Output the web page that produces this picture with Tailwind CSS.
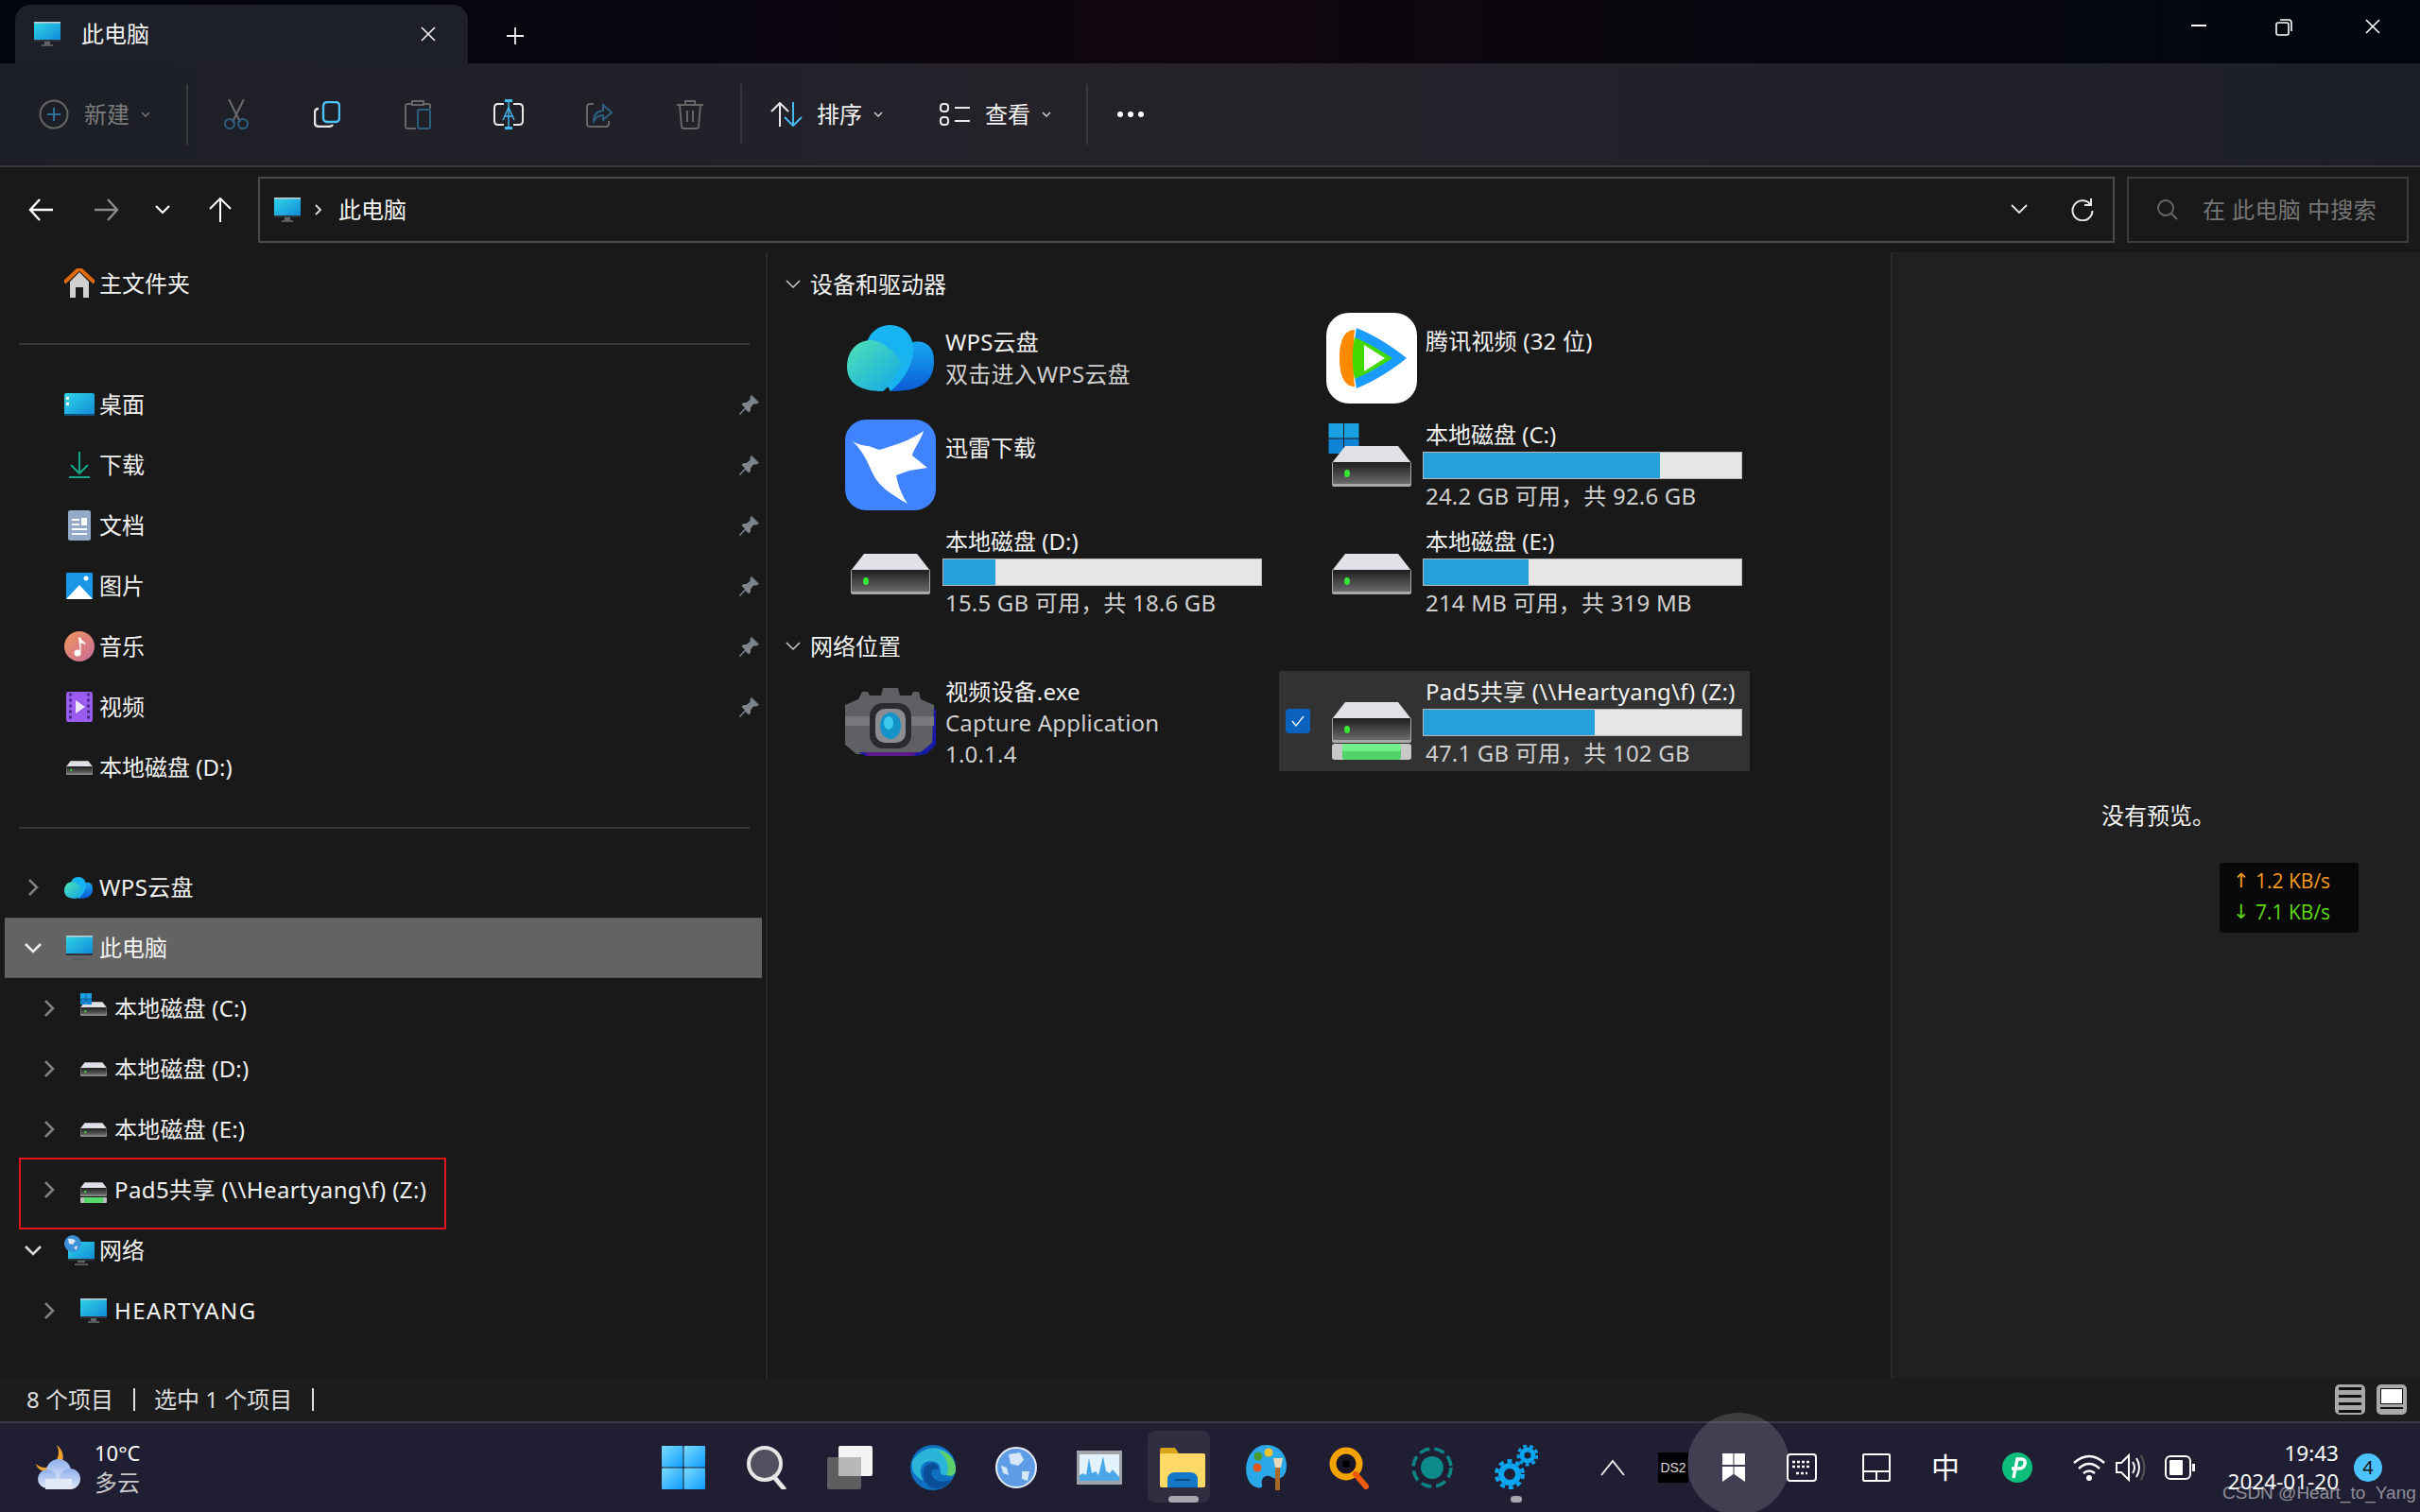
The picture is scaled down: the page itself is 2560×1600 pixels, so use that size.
<!DOCTYPE html>
<html lang="zh-CN">
<head>
  <meta charset="UTF-8" />
  <title>此电脑 - 文件资源管理器</title>
  <script src="https://cdn.jsdelivr.net/npm/@tailwindcss/browser@4"></script>
</head>
<body class="relative w-[2560px] h-[1600px] overflow-hidden bg-[#191919] text-[24px] text-[#f2f2f2] font-['Noto_Sans','Noto_Sans_CJK_SC',sans-serif]">

  <!-- shared icons -->
  <svg class="absolute w-0 h-0">
    <defs>
      <linearGradient id="screen" x1="0" y1="0" x2="1" y2="1"><stop offset="0" stop-color="#2fd6e6"/><stop offset="1" stop-color="#1189d8"/></linearGradient>
      <linearGradient id="driveBody" x1="0" y1="0" x2="0" y2="1"><stop offset="0" stop-color="#1e1e1e"/><stop offset="1" stop-color="#6a6a6a"/></linearGradient>
      <linearGradient id="winBlue" x1="0" y1="0" x2="1" y2="1"><stop offset="0" stop-color="#7bdcff"/><stop offset="1" stop-color="#0f9cff"/></linearGradient>
      <linearGradient id="cloudTeal" x1="0" y1="0" x2="1" y2="1"><stop offset="0" stop-color="#4fe3b5"/><stop offset="1" stop-color="#12a6e8"/></linearGradient>
      <linearGradient id="cloudBlue" x1="0" y1="0" x2="0" y2="1"><stop offset="0" stop-color="#17a8f0"/><stop offset="1" stop-color="#0b5bd6"/></linearGradient>
      <linearGradient id="music" x1="0" y1="0" x2="1" y2="1"><stop offset="0" stop-color="#f0975a"/><stop offset="1" stop-color="#c96a9c"/></linearGradient>
      <linearGradient id="cloudPale" x1="0" y1="0" x2="0" y2="1"><stop offset="0" stop-color="#8fb0ec"/><stop offset="1" stop-color="#e2eaf8"/></linearGradient>
      <symbol id="pc" viewBox="0 0 28 26">
        <rect width="28" height="20" fill="url(#screen)"/><rect width="28" height="1.5" fill="#c4d0d6"/><rect y="19" width="28" height="2" fill="#2f3338"/>
        <rect x="11" y="21" width="6" height="3" fill="#666"/><rect x="8" y="24" width="12" height="2" fill="#55585c"/>
      </symbol>
      <symbol id="drive" viewBox="0 0 84 43">
        <path d="M14 0H70L84 18H0Z" fill="#e0e1e6"/><rect y="17" width="84" height="26" rx="2" fill="#a9a9a9"/><rect x="1" y="17" width="82" height="23" fill="url(#driveBody)"/>
        <ellipse cx="16" cy="29" rx="3" ry="4" fill="#35e835"/>
      </symbol>
      <symbol id="win" viewBox="0 0 32 32">
        <rect width="15.5" height="15.5" fill="#1ba1e2"/><rect x="16.5" width="15.5" height="15.5" fill="#1ba1e2"/><rect y="16.5" width="15.5" height="15.5" fill="#0f84d6"/><rect x="16.5" y="16.5" width="15.5" height="15.5" fill="#0f84d6"/>
      </symbol>
      <symbol id="pin" viewBox="0 0 21 21">
        <path d="M13 0l8 8-3 1.500-3 0-3 4 0 3-2 2-3.500-3.500L1 21l-1 0 0-1 6-6.500L2.500 10l2-2 3 0 4-3 0-3z" fill="#7d848b"/>
      </symbol>
      <symbol id="cloud" viewBox="0 0 92 70">
        <path d="M46 70C76 70 92 62 92 38 92 20 80 16 70 18L50 40Z" fill="url(#cloudBlue)"/>
        <path d="M20 26C20 10 32 0 46 0 62 0 72 14 70 30 68 46 58 60 46 70Z" fill="#18b4f2"/>
        <path d="M0 44C0 26 12 16 26 16 34 16 50 26 58 40 52 54 46 64 38 70 14 70 0 62 0 44Z" fill="url(#cloudTeal)"/>
      </symbol>
    </defs>
  </svg>

  <!-- title bar -->
  <div class="flex h-[67px] bg-linear-to-r from-[#02050f] via-[#10060e] to-[#01060f]">
    <div class="flex items-center ml-4 mt-[5px] w-[479px] pl-5 rounded-t-[16px] bg-[#1e2029]">
      <svg class="w-7 h-[26px]"><use href="#pc"/></svg>
      <span class="ml-[22px]">此电脑</span>
      <svg class="ml-auto mr-[34px] w-4 h-4" viewBox="0 0 16 16" fill="none" stroke="#f0f0f0" stroke-width="1.600"><path d="M1 1L15 15M15 1L1 15"/></svg>
    </div>
    <svg class="ml-[41px] self-center mt-2 w-[18px] h-[18px]" viewBox="0 0 18 18" fill="none" stroke="#f0f0f0" stroke-width="1.800"><path d="M9 0V18M0 9H18"/></svg>
    <div class="ml-auto flex items-start pt-5">
      <svg class="w-4 h-[14px]" viewBox="0 0 16 14" fill="none" stroke="#fff" stroke-width="2"><path d="M0 7H16"/></svg>
      <svg class="ml-[73px] w-[18px] h-[18px]" viewBox="0 0 18 18" fill="none" stroke="#fff" stroke-width="1.600"><rect x="1" y="4" width="13" height="13" rx="2"/><path d="M5 1H14Q17 1 17 4V13"/></svg>
      <svg class="ml-[77px] mr-[42px] w-4 h-4" viewBox="0 0 16 16" fill="none" stroke="#fff" stroke-width="1.600"><path d="M1 1L15 15M15 1L1 15"/></svg>
    </div>
  </div>

  <!-- command bar -->
  <div class="flex items-center h-[110px] border-b-2 border-[#3a3a3a] bg-linear-to-r from-[#1c1f27] via-[#26222a] to-[#1c1f28]">
    <div class="flex items-center w-[197px] pl-[41px] text-[#7a7a7a]">
      <svg class="w-8 h-8" viewBox="0 0 32 32" fill="none"><circle cx="16" cy="16" r="14.500" stroke="#666" stroke-width="2"/><path d="M16 9V23M9 16H23" stroke="#2f6f96" stroke-width="2"/></svg>
      <span class="ml-4">新建</span>
      <svg class="ml-3 w-[10px] h-[6px]" viewBox="0 0 10 6" fill="none" stroke="#777" stroke-width="1.500"><path d="M1 1L5 5L9 1"/></svg>
    </div>
    <div class="w-[2px] h-[64px] bg-[#38383c]"></div>
    <div class="ml-[3px] w-[96px] flex justify-center">
      <svg class="w-7 h-8" viewBox="0 0 28 32" fill="none" stroke-width="2"><path d="M6 0L18 24M22 0L10 24" stroke="#6a6a6a"/><circle cx="7" cy="26" r="5" stroke="#2d5f80"/><circle cx="21" cy="26" r="5" stroke="#2d5f80"/></svg>
    </div>
    <div class="w-[96px] flex justify-center">
      <svg class="w-7 h-7" viewBox="0 0 28 28" fill="none" stroke-width="2.400"><rect x="10" y="1" width="17" height="21" rx="4" stroke="#4cc2f5"/><path d="M5 8Q1 8 1 12V23Q1 27 6 27H15Q19 27 20 25" stroke="#e6e6e6"/></svg>
    </div>
    <div class="w-[96px] flex justify-center">
      <svg class="w-7 h-8" viewBox="0 0 28 32" fill="none" stroke-width="2"><path d="M7 5H3Q1 5 1 7V29Q1 31 3 31H12M21 5H25Q27 5 27 7V10M8 6V2H20V6Z" stroke="#666"/><rect x="14" y="11" width="13" height="20" rx="2" stroke="#2d5f80"/></svg>
    </div>
    <div class="w-[96px] flex justify-center">
      <svg class="w-8 h-8" viewBox="0 0 32 32" fill="none" stroke-width="2"><path d="M11 5H5Q1 5 1 9V23Q1 27 5 27H11M21 5H27Q31 5 31 9V23Q31 27 27 27H21" stroke="#e8e8e8"/><path d="M16 1V31" stroke="#45baf0" stroke-width="1.400"/><path d="M12 1.500H20M12 30.500H20" stroke="#45baf0" stroke-width="3"/><path d="M10 22L16 9L22 22M12 18H20" stroke="#45baf0" stroke-width="1.400"/></svg>
    </div>
    <div class="w-[96px] flex justify-center">
      <svg class="w-7 h-7" viewBox="0 0 28 28" fill="none" stroke-width="2"><path d="M8 3H4Q1 3 1 6V24Q1 27 4 27H21Q24 27 24 24V21" stroke="#666"/><path d="M8 21Q8 11 18 10V4L27 12L18 20V15Q12 15 8 21Z" stroke="#2d5f80"/></svg>
    </div>
    <div class="w-[96px] flex justify-center">
      <svg class="w-7 h-8" viewBox="0 0 28 32" fill="none" stroke="#666" stroke-width="2"><path d="M0 6H28M9 6V2H19V6M3 6L5 29Q5 31 8 31H20Q23 31 23 29L25 6M11 12V24M17 12V24"/></svg>
    </div>
    <div class="ml-[5px] w-[2px] h-[64px] bg-[#38383c]"></div>
    <div class="ml-[30px] flex items-center">
      <svg class="w-[34px] h-[26px]" viewBox="0 0 34 26" fill="none" stroke-width="2"><path d="M10 26V1M1 10L10 1L19 10" stroke="#e8e8e8"/><path d="M24 0V25M15 16L24 25L33 16" stroke="#45baf0"/></svg>
      <span class="ml-[15px]">排序</span>
      <svg class="ml-[12px] w-[10px] h-[6px]" viewBox="0 0 10 6" fill="none" stroke="#ccc" stroke-width="1.500"><path d="M1 1L5 5L9 1"/></svg>
    </div>
    <div class="ml-[60px] flex items-center">
      <svg class="w-8 h-6" viewBox="0 0 32 24" fill="none" stroke="#e8e8e8" stroke-width="2"><rect x="1" y="1" width="8" height="8" rx="3"/><rect x="1" y="15" width="8" height="8" rx="3"/><path d="M16 5H32M16 19H32"/></svg>
      <span class="ml-[16px]">查看</span>
      <svg class="ml-[12px] w-[10px] h-[6px]" viewBox="0 0 10 6" fill="none" stroke="#ccc" stroke-width="1.500"><path d="M1 1L5 5L9 1"/></svg>
    </div>
    <div class="ml-[37px] w-[2px] h-[64px] bg-[#38383c]"></div>
    <div class="ml-[31px] flex gap-[5px]">
      <div class="w-[6px] h-[6px] rounded-full bg-white"></div><div class="w-[6px] h-[6px] rounded-full bg-white"></div><div class="w-[6px] h-[6px] rounded-full bg-white"></div>
    </div>
  </div>

  <!-- address row -->
  <div class="flex items-center h-[90px] pb-[1px]">
    <svg class="ml-[30px] w-[26px] h-[24px]" viewBox="0 0 26 24" fill="none" stroke="#fff" stroke-width="2.400"><path d="M12 1L2 12L12 23M2 12H26"/></svg>
    <svg class="ml-[44px] w-[26px] h-[24px]" viewBox="0 0 26 24" fill="none" stroke="#8c8c8c" stroke-width="2.400"><path d="M14 1L24 12L14 23M24 12H0"/></svg>
    <svg class="ml-[38px] w-[16px] h-[10px]" viewBox="0 0 16 10" fill="none" stroke="#fff" stroke-width="2.200"><path d="M1 1L8 8L15 1"/></svg>
    <svg class="ml-[41px] w-[24px] h-[26px]" viewBox="0 0 24 26" fill="none" stroke="#fff" stroke-width="2"><path d="M12 26V1M1 12L12 1L23 12"/></svg>
    <div class="ml-[28px] flex items-center w-[1964px] h-[70px] border-2 border-[#4a4a4a] pl-[15px]">
      <svg class="w-7 h-[26px]"><use href="#pc"/></svg>
      <svg class="ml-[15px] w-2 h-3" viewBox="0 0 8 12" fill="none" stroke="#ddd" stroke-width="1.800"><path d="M1 1L6 6L1 11"/></svg>
      <span class="ml-[17px]">此电脑</span>
      <svg class="ml-auto w-[18px] h-[11px]" viewBox="0 0 18 11" fill="none" stroke="#e8e8e8" stroke-width="1.800"><path d="M1 1L9 9L17 1"/></svg>
      <svg class="ml-[46px] mr-[20px] w-6 h-6" viewBox="0 0 24 24" fill="none" stroke="#e8e8e8" stroke-width="2"><path d="M20 6A10.500 10.500 0 1 0 22.500 13M21 0V7H14"/></svg>
    </div>
    <div class="ml-[13px] flex items-center w-[298px] h-[70px] border-2 border-[#3c3c3c] pl-[30px] text-[#767676]">
      <svg class="w-[22px] h-[22px]" viewBox="0 0 22 22" fill="none" stroke="#6a6a6a" stroke-width="1.800"><circle cx="9" cy="9" r="8"/><path d="M15 15L21 21"/></svg>
      <span class="ml-[26px] tracking-[0.4px]">在 此电脑 中搜索</span>
    </div>
  </div>

  <!-- body -->
  <div class="flex h-[1191px]">
    <!-- navigation pane -->
    <aside class="w-[812px] shrink-0 pt-[1px] pl-[5px] border-r-2 border-[#2a2a2a]">
      <div class="flex items-center h-16">
        <svg class="ml-[63px] w-8 h-8" viewBox="0 0 32 32"><path d="M6 14L16 4L26 14V31H20V20H12V31H6Z" fill="#cfcfcf"/><path d="M0 15L16 0L32 15" fill="none" stroke="#e06a0c" stroke-width="4"/></svg>
        <span class="ml-[5px]">主文件夹</span>
      </div>
      <div class="mt-[31px] mb-[31px] ml-[15px] w-[773px] h-[2px] bg-[#383838]"></div>

      <div class="flex items-center h-16">
        <svg class="ml-[63px] w-8 h-6" viewBox="0 0 32 24"><rect width="32" height="24" rx="2" fill="url(#screen)"/><rect y="22" width="32" height="2" fill="#12507a"/><rect x="2" y="4" width="3" height="3" fill="#fff"/><rect x="2" y="10" width="3" height="3" fill="#fff"/></svg>
        <span class="ml-[5px]">桌面</span>
        <svg class="ml-auto mr-[7px] w-[21px] h-[21px]"><use href="#pin"/></svg>
      </div>
      <div class="flex items-center h-16">
        <svg class="ml-[67px] w-6 h-7" viewBox="0 0 24 28" fill="none" stroke="#16a78a" stroke-width="2"><path d="M12 0V22M3 14L12 23L21 14"/><path d="M1 27H23"/></svg>
        <span class="ml-[9px]">下载</span>
        <svg class="ml-auto mr-[7px] w-[21px] h-[21px]"><use href="#pin"/></svg>
      </div>
      <div class="flex items-center h-16">
        <svg class="ml-[67px] w-6 h-8" viewBox="0 0 24 32"><rect width="24" height="32" rx="2" fill="#92aac8"/><path d="M4 10H12M4 15H12M4 20H20M4 25H20" stroke="#fff" stroke-width="2"/><rect x="14" y="8" width="6" height="8" fill="#fff"/></svg>
        <span class="ml-[9px]">文档</span>
        <svg class="ml-auto mr-[7px] w-[21px] h-[21px]"><use href="#pin"/></svg>
      </div>
      <div class="flex items-center h-16">
        <svg class="ml-[65px] w-7 h-7" viewBox="0 0 28 28"><rect width="28" height="28" rx="1" fill="#1a96e6"/><path d="M0 28L14 13L28 28Z" fill="#fff"/><circle cx="21" cy="6" r="2.500" fill="#fff"/></svg>
        <span class="ml-[7px]">图片</span>
        <svg class="ml-auto mr-[7px] w-[21px] h-[21px]"><use href="#pin"/></svg>
      </div>
      <div class="flex items-center h-16">
        <svg class="ml-[63px] w-8 h-8" viewBox="0 0 32 32"><circle cx="16" cy="16" r="16" fill="url(#music)"/><path d="M15 7H17C17 11 22 10 22 14 20 12 18 12 17 12V22" fill="#fff" stroke="#fff"/><circle cx="14" cy="23" r="3.500" fill="#fff"/></svg>
        <span class="ml-[5px]">音乐</span>
        <svg class="ml-auto mr-[7px] w-[21px] h-[21px]"><use href="#pin"/></svg>
      </div>
      <div class="flex items-center h-16">
        <svg class="ml-[65px] w-7 h-8" viewBox="0 0 28 32"><rect width="28" height="32" rx="2" fill="#9a5cf0"/><path d="M3 3H6M3 9H6M3 15H6M3 21H6M3 27H6M22 3H25M22 9H25M22 15H25M22 21H25M22 27H25" stroke="#4a2a88" stroke-width="3"/><path d="M10 9L20 16L10 23Z" fill="#efe6ff"/></svg>
        <span class="ml-[7px]">视频</span>
        <svg class="ml-auto mr-[7px] w-[21px] h-[21px]"><use href="#pin"/></svg>
      </div>
      <div class="flex items-center h-16">
        <svg class="ml-[65px] w-7 h-[15px]"><use href="#drive"/></svg>
        <span class="ml-[7px]">本地磁盘 (D:)</span>
      </div>
      <div class="mt-[31px] mb-[30px] ml-[15px] w-[773px] h-[2px] bg-[#383838]"></div>

      <div class="flex items-center h-16">
        <svg class="ml-[24px] w-[12px] h-[18px]" viewBox="0 0 12 18" fill="none" stroke="#808080" stroke-width="2.600"><path d="M2 1L10 9L2 17"/></svg>
        <svg class="ml-[27px] w-[30px] h-[23px]"><use href="#cloud"/></svg>
        <span class="ml-[7px] tracking-[0.4px]">WPS云盘</span>
      </div>
      <div class="flex items-center h-16 mr-[4px] border-y border-[#555] bg-[#636363]">
        <svg class="ml-[21px] w-[18px] h-[12px]" viewBox="0 0 18 12" fill="none" stroke="#ececec" stroke-width="2.600"><path d="M1 2L9 10L17 2"/></svg>
        <svg class="ml-[26px] w-7 h-[26px]"><use href="#pc"/></svg>
        <span class="ml-[7px]">此电脑</span>
      </div>
      <div class="flex items-center h-16">
        <svg class="ml-[41px] w-[12px] h-[18px]" viewBox="0 0 12 18" fill="none" stroke="#808080" stroke-width="2.600"><path d="M2 1L10 9L2 17"/></svg>
        <div class="relative ml-[27px] w-7 h-[15px]">
          <svg class="absolute left-0 -top-[9px] w-3 h-3"><use href="#win"/></svg>
          <svg class="w-7 h-[15px]"><use href="#drive"/></svg>
        </div>
        <span class="ml-[8px] tracking-[0.2px]">本地磁盘 (C:)</span>
      </div>
      <div class="flex items-center h-16">
        <svg class="ml-[41px] w-[12px] h-[18px]" viewBox="0 0 12 18" fill="none" stroke="#808080" stroke-width="2.600"><path d="M2 1L10 9L2 17"/></svg>
        <svg class="ml-[27px] w-7 h-[15px]"><use href="#drive"/></svg>
        <span class="ml-[8px] tracking-[0.2px]">本地磁盘 (D:)</span>
      </div>
      <div class="flex items-center h-16">
        <svg class="ml-[41px] w-[12px] h-[18px]" viewBox="0 0 12 18" fill="none" stroke="#808080" stroke-width="2.600"><path d="M2 1L10 9L2 17"/></svg>
        <svg class="ml-[27px] w-7 h-[15px]"><use href="#drive"/></svg>
        <span class="ml-[8px] tracking-[0.2px]">本地磁盘 (E:)</span>
      </div>
      <div class="flex items-center h-16">
        <svg class="ml-[41px] w-[12px] h-[18px]" viewBox="0 0 12 18" fill="none" stroke="#808080" stroke-width="2.600"><path d="M2 1L10 9L2 17"/></svg>
        <svg class="ml-[27px] w-7 h-[22px] -mb-[6px]" viewBox="0 0 28 22"><use href="#drive" width="28" height="15"/><rect y="16" width="28" height="6" rx="1" fill="#bbb"/><rect x="4" y="16" width="20" height="6" fill="#55d96a"/></svg>
        <span class="ml-[8px] tracking-[0.4px]">Pad5共享 (\\Heartyang\f) (Z:)</span>
      </div>
      <div class="flex items-center h-16">
        <svg class="ml-[21px] w-[18px] h-[12px]" viewBox="0 0 18 12" fill="none" stroke="#d8d8d8" stroke-width="2.600"><path d="M1 2L9 10L17 2"/></svg>
        <svg class="ml-[24px] w-8 h-8" viewBox="0 0 32 32"><rect x="4" y="7" width="28" height="19" fill="url(#screen)"/><rect x="4" y="25" width="28" height="2" fill="#2f3338"/><rect x="14" y="27" width="8" height="2" fill="#666"/><rect x="11" y="30" width="14" height="2" fill="#55585c"/><circle cx="9" cy="9" r="9" fill="#3d8fd6"/><path d="M4 4Q9 3 12 6L9 10 5 9ZM10 13L14 11 13 16Z" fill="#d8e8f5"/></svg>
        <span class="ml-[5px]">网络</span>
      </div>
      <div class="flex items-center h-16">
        <svg class="ml-[41px] w-[12px] h-[18px]" viewBox="0 0 12 18" fill="none" stroke="#808080" stroke-width="2.600"><path d="M2 1L10 9L2 17"/></svg>
        <svg class="ml-[27px] w-7 h-[26px]"><use href="#pc"/></svg>
        <span class="ml-[8px] tracking-[1.400px]">HEARTYANG</span>
      </div>
    </aside>

    <!-- tiles -->
    <main class="w-[1188px] shrink-0 pt-[14px] pl-[33px]">
      <div class="flex items-center h-10 -ml-[14px]">
        <svg class="w-4 h-[10px]" viewBox="0 0 16 10" fill="none" stroke="#ccc" stroke-width="1.500"><path d="M1 1L8 8L15 1"/></svg>
        <span class="ml-[10px]">设备和驱动器</span>
      </div>
      <div class="mt-[10px] grid grid-cols-[498px_498px] gap-x-[10px] gap-y-[13px] auto-rows-[100px]">
        <div class="flex">
          <div class="w-[152px] shrink-0 pl-[51px] pt-[13px]"><svg class="w-[92px] h-[70px]"><use href="#cloud"/></svg></div>
          <div class="pl-[3px] pt-[14px] leading-[34px] tracking-[0.2px]"><div>WPS云盘</div><div class="text-[#d0d0d0]">双击进入WPS云盘</div></div>
        </div>
        <div class="flex">
          <div class="w-[152px] shrink-0 pl-[50px]">
            <svg class="w-[96px] h-[96px]" viewBox="0 0 96 96"><rect width="96" height="96" rx="24" fill="#fff"/><path d="M30 18C28 38 28 60 30 78 20 78 14 68 14 48 14 28 20 18 30 18Z" fill="#ff8a00"/><path d="M32 16C52 24 70 36 85 48 70 60 52 72 32 80 28 60 28 36 32 16Z" fill="#1a9bff"/><path d="M30 26C44 32 58 40 70 48 58 56 44 64 30 70 27 56 27 40 30 26Z" fill="#42d800"/><path d="M40 34L62 48 40 62Z" fill="#fff"/></svg>
          </div>
          <div class="pl-[3px] pt-[13px] leading-[34px] tracking-[0.2px]">腾讯视频 (32 位)</div>
        </div>
        <div class="flex">
          <div class="w-[152px] shrink-0 pl-[49px]">
            <svg class="w-[96px] h-[96px]" viewBox="0 0 96 96"><rect width="96" height="96" rx="22" fill="#3f83ff"/><path d="M7 22C14 28 22 27 28 29L36 32C50 28 70 22 83 12 80 22 73 30 71 38L87 51 68 54 54 59C56 70 60 80 66 89 50 80 38 72 32 62 26 52 22 36 7 22Z" fill="#fff"/></svg>
          </div>
          <div class="pl-[3px] pt-[13px] leading-[34px]">迅雷下载</div>
        </div>
        <div class="flex">
          <div class="relative w-[152px] shrink-0">
            <svg class="absolute left-[52px] top-[4px] w-[33px] h-[32px]"><use href="#win"/></svg>
            <svg class="absolute left-[56px] top-[28px] w-[84px] h-[43px]"><use href="#drive"/></svg>
          </div>
          <div class="w-[338px]">
            <div class="h-8 pl-[3px] leading-8">本地磁盘 (C:)</div>
            <div class="mt-[2px] h-[29px] border border-[#b8b8b8] bg-[#e6e6e6]"><div class="h-full w-[250px] bg-[#26a0da]"></div></div>
            <div class="h-9 pl-[3px] leading-9 text-[#d0d0d0] tracking-[0.2px]">24.2 GB 可用，共 92.6 GB</div>
          </div>
        </div>
        <div class="flex">
          <div class="w-[152px] shrink-0 pl-[55px] pt-[29px]"><svg class="w-[84px] h-[43px]"><use href="#drive"/></svg></div>
          <div class="w-[338px]">
            <div class="h-8 pl-[3px] leading-8">本地磁盘 (D:)</div>
            <div class="mt-[2px] h-[29px] border border-[#b8b8b8] bg-[#e6e6e6]"><div class="h-full w-[55px] bg-[#26a0da]"></div></div>
            <div class="h-9 pl-[3px] leading-9 text-[#d0d0d0] tracking-[0.2px]">15.5 GB 可用，共 18.6 GB</div>
          </div>
        </div>
        <div class="flex">
          <div class="w-[152px] shrink-0 pl-[56px] pt-[29px]"><svg class="w-[84px] h-[43px]"><use href="#drive"/></svg></div>
          <div class="w-[338px]">
            <div class="h-8 pl-[3px] leading-8">本地磁盘 (E:)</div>
            <div class="mt-[2px] h-[29px] border border-[#b8b8b8] bg-[#e6e6e6]"><div class="h-full w-[111px] bg-[#26a0da]"></div></div>
            <div class="h-9 pl-[3px] leading-9 text-[#d0d0d0] tracking-[0.2px]">214 MB 可用，共 319 MB</div>
          </div>
        </div>
      </div>

      <div class="mt-[7px] flex items-center h-10 -ml-[14px]">
        <svg class="w-4 h-[10px]" viewBox="0 0 16 10" fill="none" stroke="#ccc" stroke-width="1.500"><path d="M1 1L8 8L15 1"/></svg>
        <span class="ml-[10px]">网络位置</span>
      </div>
      <div class="mt-[6px] grid grid-cols-[498px_498px] gap-x-[10px] h-[106px]">
        <div class="flex">
          <div class="w-[152px] shrink-0 pl-[49px] pt-[18px]">
            <svg class="w-[96px] h-[72px]" viewBox="0 0 96 72"><path d="M40 0H56L58 8H70L72 4 78 4 80 12 94 18V62L84 70H12L0 60V18L14 12 18 4 24 4 26 8H38Z" fill="#5f6064"/><path d="M94 20L96 24V60L86 70 74 72H22L14 68H80L92 58Z" fill="#1a1aa8"/><path d="M0 30H94V40H0Z" fill="#77787c"/><rect x="26" y="16" width="44" height="48" rx="14" fill="#2a2b30"/><rect x="32" y="22" width="32" height="36" rx="10" fill="#8a8c92"/><ellipse cx="48" cy="40" rx="11" ry="14" fill="#1493c8"/><ellipse cx="46" cy="37" rx="5" ry="7" fill="#3cc8ec"/><path d="M20 68H76L72 72H24Z" fill="#5a1a8a"/></svg>
          </div>
          <div class="pl-[3px] pt-[5px] leading-[33px] text-[#d0d0d0] tracking-[0.2px]"><div class="text-[#f2f2f2]">视频设备.exe</div><div>Capture Application</div><div>1.0.1.4</div></div>
        </div>
        <div class="relative flex bg-[#323232]">
          <div class="absolute left-[7px] top-[40px] flex items-center justify-center w-[26px] h-[26px] rounded-[4px] bg-[#0a62bc]">
            <svg class="w-[14px] h-[12px]" viewBox="0 0 14 12" fill="none" stroke="#fff" stroke-width="1.300"><path d="M1 6L5 11L13 1"/></svg>
          </div>
          <div class="w-[152px] shrink-0 pl-[56px] pt-[33px]">
            <svg class="w-[84px] h-[61px]" viewBox="0 0 84 61"><use href="#drive" width="84" height="43"/><rect y="44" width="84" height="17" rx="3" fill="#c8c8c8"/><rect x="11" y="44" width="62" height="17" rx="3" fill="#4ed468"/><rect x="11" y="44" width="62" height="8" rx="3" fill="#74f088"/></svg>
          </div>
          <div class="w-[338px] pt-[6px]">
            <div class="h-8 pl-[3px] leading-8 whitespace-nowrap tracking-[0.3px]">Pad5共享 (\\Heartyang\f) (Z:)</div>
            <div class="mt-[2px] h-[29px] border border-[#b8b8b8] bg-[#e6e6e6]"><div class="h-full w-[181px] bg-[#26a0da]"></div></div>
            <div class="h-9 pl-[3px] leading-9 text-[#d0d0d0] tracking-[0.2px]">47.1 GB 可用，共 102 GB</div>
          </div>
        </div>
      </div>
    </main>

    <!-- details pane -->
    <div class="flex-1 border-l-2 border-[#2a2a2a] bg-[#202020] pt-[578px] pl-[221px]">没有预览。</div>
  </div>

  <!-- status bar -->
  <div class="flex items-center h-[46px] bg-[#1c1c1c] pl-[28px] text-[#dedede]">
    <span class="w-[113px]">8 个项目</span>
    <div class="w-[2px] h-6 bg-[#e0e0e0]"></div>
    <span class="ml-[20px]">选中 1 个项目</span>
    <div class="ml-[21px] w-[2px] h-6 bg-[#e0e0e0]"></div>
    <div class="ml-auto mr-[14px] flex gap-3">
      <div class="flex flex-col justify-center gap-[5px] w-8 h-8 rounded-[5px] bg-[#a8a8a8] px-[4px]"><div class="h-[3px] bg-[#111]"></div><div class="h-[3px] bg-[#111]"></div><div class="h-[3px] bg-[#111]"></div><div class="h-[3px] bg-[#111]"></div></div>
      <div class="flex flex-col w-8 h-8 rounded-[5px] bg-[#a8a8a8] px-[4px] pt-[4px]"><div class="h-[17px] bg-white border border-[#111]"></div><div class="mt-[3px] h-[2px] bg-[#111]"></div></div>
    </div>
  </div>

  <!-- taskbar -->
  <div class="relative flex items-center h-[96px] border-t-2 border-[#3a3846] bg-[#201e33]">
    <svg class="ml-[38px] w-12 h-12" viewBox="0 0 48 48"><path d="M22 0C26 8 24 18 14 23 10 25 4 24 0 20 2 28 14 32 22 26 32 18 30 6 22 0Z" fill="#f2a12a"/><circle cx="24" cy="28" r="13" fill="url(#cloudPale)"/><circle cx="12" cy="36" r="10" fill="url(#cloudPale)"/><circle cx="36" cy="36" r="11" fill="url(#cloudPale)"/><rect x="10" y="36" width="28" height="11" fill="#e2eaf8"/></svg>
    <div class="ml-[14px] w-[579px] leading-[31px]"><div class="text-[22px] text-white">10°C</div><div class="text-[#c8c8c8]">多云</div></div>

    <div class="w-[88px] flex justify-center">
      <svg class="w-[46px] h-[46px]" viewBox="0 0 46 46" fill="url(#winBlue)"><rect width="22.500" height="22.500" rx="1"/><rect x="23.500" width="22.500" height="22.500" rx="1"/><rect y="23.500" width="22.500" height="22.500" rx="1"/><rect x="23.500" y="23.500" width="22.500" height="22.500" rx="1"/></svg>
    </div>
    <div class="w-[88px] flex justify-center">
      <svg class="w-[42px] h-[46px]" viewBox="0 0 42 46"><circle cx="19" cy="19" r="17" fill="#50505f" stroke="#e6e6e6" stroke-width="4"/><path d="M29 33L39 45" stroke="#e6e6e6" stroke-width="5" stroke-linecap="round"/></svg>
    </div>
    <div class="w-[88px] flex justify-center">
      <svg class="w-[48px] h-[46px]" viewBox="0 0 48 46"><rect x="12" width="36" height="32" rx="2" fill="#f4f4f4"/><rect y="12" width="36" height="34" rx="2" fill="#6a6a6a" fill-opacity=".85"/><rect x="12" y="12" width="24" height="20" fill="#b8b8b8"/></svg>
    </div>
    <div class="w-[88px] flex justify-center">
      <svg class="w-12 h-12" viewBox="0 0 48 48"><circle cx="24" cy="24" r="24" fill="#0f6fc0"/><path d="M2 18C8 2 38-6 47 20 48 28 44 32 36 32 28 32 36 22 26 18 14 14 6 26 14 38 6 34 0 28 2 18Z" fill="#2bb5d8"/><path d="M30 6C42 8 48 16 48 26 48 32 44 34 38 32 42 26 40 14 30 6Z" fill="#5ed06a"/><path d="M14 28C14 18 30 16 30 26 24 24 20 28 24 34 28 40 38 40 44 36 38 46 26 50 18 42 14 38 14 34 14 28Z" fill="#0a4e9a"/></svg>
    </div>
    <div class="w-[88px] flex justify-center">
      <svg class="w-[44px] h-[44px]" viewBox="0 0 44 44"><circle cx="22" cy="22" r="21" fill="#5f9ce6" stroke="#e8eef8" stroke-width="2"/><path d="M14 8L26 6 30 14 24 20 16 18ZM28 26L36 26 34 36 28 34Z" fill="#d4e6f8"/><path d="M6 20L12 22 14 30 8 28Z" fill="#d4e6f8"/></svg>
    </div>
    <div class="w-[88px] flex justify-center">
      <svg class="w-12 h-9" viewBox="0 0 48 36"><rect width="48" height="36" fill="#a0a4aa"/><rect x="3" y="4" width="42" height="28" fill="#e4f2fb"/><path d="M3 32V26L7 24 10 26 13 8 16 24 20 22 23 26 28 6 31 22 35 24 38 20 45 28V32Z" fill="#4aa8e8"/></svg>
    </div>
    <div class="relative w-[88px] flex justify-center">
      <div class="absolute left-[7px] -top-[18px] w-[66px] h-[76px] rounded-[8px] bg-[#302e40]"></div>
      <svg class="relative w-12 h-[42px]" viewBox="0 0 48 42"><path d="M0 2Q0 0 2 0H16L20 6H46V10H0Z" fill="#d9a31a"/><rect y="6" width="48" height="36" rx="2" fill="#ffd966"/><path d="M8 42V34Q8 26 16 26H32Q40 26 40 34V42Z" fill="#1478c8"/><rect x="16" y="33" width="16" height="2" fill="#0a4a80"/></svg>
      <div class="absolute left-[29px] top-[51px] w-8 h-[7px] rounded-full bg-[#a6a6b0]"></div>
    </div>
    <div class="w-[88px] flex justify-center">
      <svg class="w-11 h-12" viewBox="0 0 44 48"><path d="M22 0C36 0 44 10 44 22 44 36 34 38 28 34 22 30 16 36 18 42 20 48 8 46 4 38-4 22 6 0 22 0Z" fill="#2aa8e8"/><circle cx="13" cy="24" r="4.500" fill="#e0561c"/><circle cx="14" cy="12" r="4.500" fill="#4a9a30"/><circle cx="25" cy="8" r="4.500" fill="#f2c230"/><path d="M30 14H40L38 24H32Z" fill="#e8d8b8"/><rect x="32" y="24" width="5" height="24" fill="#a8682a"/></svg>
    </div>
    <div class="w-[88px] flex justify-center">
      <svg class="w-11 h-[46px]" viewBox="0 0 44 46"><circle cx="19" cy="19" r="14" fill="#1a1628" stroke="#f5a300" stroke-width="7"/><circle cx="19" cy="19" r="4" fill="#000"/><path d="M29 30L40 43" stroke="#f0580a" stroke-width="6" stroke-linecap="round"/></svg>
    </div>
    <div class="w-[88px] flex justify-center">
      <svg class="w-[44px] h-[44px]" viewBox="0 0 44 44"><circle cx="22" cy="22" r="20" fill="none" stroke="#0d8585" stroke-width="3.500" stroke-dasharray="11 5"/><circle cx="22" cy="22" r="12" fill="#0d8a8a"/></svg>
    </div>
    <div class="relative w-[88px] flex justify-center">
      <svg class="w-12 h-[48px]" viewBox="0 0 48 48" fill="none" stroke="#0aa5ef"><circle cx="18" cy="31" r="9" stroke-width="6"/><circle cx="18" cy="31" r="14" stroke-width="4" stroke-dasharray="5 4"/><circle cx="37" cy="11" r="6" stroke-width="5"/><circle cx="37" cy="11" r="10" stroke-width="3" stroke-dasharray="4 3"/></svg>
      <div class="absolute left-[39px] top-[54px] w-3 h-[7px] rounded-full bg-[#a6a6b0]"></div>
    </div>

    <svg class="ml-[39px] w-10 h-[18px]" viewBox="0 0 40 18" fill="none" stroke="#eee" stroke-width="2"><path d="M8 17L20 2L32 17"/></svg>
    <div class="ml-[28px] flex items-center justify-center w-8 h-8 bg-black text-[14px] text-[#ddd] font-['Liberation_Sans',sans-serif]">DS2</div>
    <svg class="relative z-10 ml-[36px] w-6 h-[30px]" viewBox="0 0 24 30" fill="#fff"><rect width="11.500" height="12"/><rect x="12.500" width="11.500" height="12"/><path d="M0 14H11.500V22L0 30ZM12.500 14H24V30L12.500 22Z"/></svg>
    <svg class="relative z-10 ml-[44px] w-8 h-[30px]" viewBox="0 0 32 30" fill="none" stroke="#fff" stroke-width="2"><rect x="1" y="1" width="30" height="28" rx="3"/><path d="M6 9H26M6 14H26M10 21H22" stroke-dasharray="3 2" stroke-width="2.500"/></svg>
    <svg class="ml-[48px] w-[30px] h-[30px]" viewBox="0 0 30 30" fill="none" stroke="#fff" stroke-width="2"><rect x="1" y="1" width="28" height="28" rx="1"/><path d="M1 19H29M15 19V29"/></svg>
    <span class="ml-[43px] w-[30px] text-[30px] leading-none text-white">中</span>
    <div class="ml-[45px] flex items-center justify-center w-8 h-8 rounded-full bg-[#0cbd7b]">
      <svg class="w-5 h-6" viewBox="0 0 20 24" fill="none" stroke="#fff" stroke-width="3.500"><path d="M6 23L10 3H14Q19 3 18 8 17 13 12 13H4"/></svg>
    </div>
    <svg class="ml-[43px] w-[34px] h-[30px]" viewBox="0 0 34 30" fill="none" stroke="#fff" stroke-width="2.500"><path d="M1 10Q17-4 33 10M6 16Q17 6 28 16M11 21Q17 16 23 21"/><circle cx="17" cy="26" r="3" fill="#fff" stroke="none"/></svg>
    <svg class="ml-[11px] w-8 h-[30px]" viewBox="0 0 32 30" fill="none" stroke="#fff" stroke-width="2"><path d="M1 10V20H6L14 28V2L6 10Z"/><path d="M18 9Q22 15 18 21M22 5Q28 15 22 25"/><path d="M27 2Q34 15 27 28" stroke="#555"/></svg>
    <svg class="ml-[20px] w-8 h-[26px]" viewBox="0 0 32 26" fill="none"><rect x="1" y="1" width="26" height="24" rx="5" stroke="#fff" stroke-width="2"/><rect x="5" y="5" width="14" height="16" rx="1" fill="#fff"/><rect x="29" y="9" width="3" height="8" fill="#fff"/></svg>
    <div class="ml-auto w-[130px] text-right text-[22.500px] leading-[30px] text-white"><div>19:43</div><div>2024-01-20</div></div>
    <div class="ml-[16px] mr-[40px] flex items-center justify-center w-[30px] h-[30px] rounded-full bg-[#4cc2ff] text-[20px] text-[#111]">4</div>

    <!-- hover circle on the tray, and the image watermark -->
    <div class="absolute left-[1785px] top-[-11px] w-[108px] h-[108px] rounded-full bg-white/15"></div>
    <div class="absolute left-[2351px] top-[62px] text-[19px] leading-6 text-white/50 font-['Liberation_Sans',sans-serif]">CSDN @Heart_to_Yang</div>
  </div>

  <!-- annotation box and floating speed meter -->
  <div class="absolute left-[20px] top-[1225px] w-[452px] h-[76px] border-2 border-[#e5141c]"></div>
  <div class="absolute left-[2348px] top-[913px] w-[147px] h-[74px] rounded-[3px] bg-[#080808] pl-[14px] pt-[3px] text-[21px] leading-[33px] font-['Open_Sans',sans-serif]">
    <div class="flex text-[#f59a1f]"><span class="w-[24px] font-['DejaVu_Sans',sans-serif]">↑</span>1.2 KB/s</div>
    <div class="flex text-[#5fd916]"><span class="w-[24px] font-['DejaVu_Sans',sans-serif]">↓</span>7.1 KB/s</div>
  </div>
</body>
</html>
